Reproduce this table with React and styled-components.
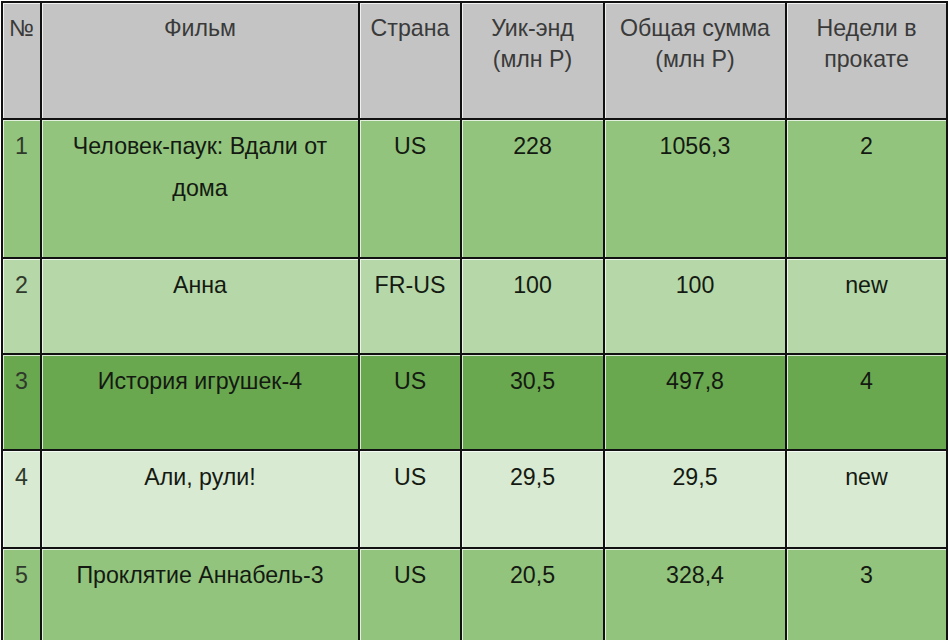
import React from "react";
import styled, { createGlobalStyle } from "styled-components";

const GlobalStyle = createGlobalStyle`
  html, body {
    margin: 0;
    padding: 0;
    background: #fff;
    overflow: hidden;
  }
  body {
    font-family: "Liberation Sans", Arial, sans-serif;
  }
`;

const Page = styled.div`
  padding: 1px 0 0 1px;
`;

const Table = styled.table`
  border-collapse: separate;
  border-spacing: 0;
  table-layout: fixed;
  width: 947px;
  font-size: 23.2px;
  line-height: 42px;
`;

const Cell = styled.td`
  box-sizing: border-box;
  border-left: 2px solid #111;
  border-top: 2px solid #111;
  padding: 5px 3px 0;
  text-align: center;
  vertical-align: top;
  color: ${(p) => (p.$dim ? "#2f3a2c" : "#141a12")};
  background: ${(p) => p.$bg};
  box-shadow: inset 1px 1px 0 rgba(255, 255, 255, 0.75);

  &:last-child {
    border-right: 2px solid #111;
  }
`;

const Head = styled(Cell).attrs({ as: "th" })`
  font-weight: normal;
  line-height: 31px;
  padding-top: 10px;
  color: #3a3a3a;
  background: #c4c4c4;
`;

const Row = styled.tr`
  height: ${(p) => p.$h}px;
`;

const widths = [39, 318, 102, 143, 182, 163];

const headers = [
  "№",
  "Фильм",
  "Страна",
  <>Уик-энд<br />(млн Р)</>,
  <>Общая сумма<br />(млн Р)</>,
  <>Недели в<br />прокате</>,
];

const rows = [
  { bg: "#93c47d", h: 139, cells: ["1", <>Человек-паук: Вдали от<br />дома</>, "US", "228", "1056,3", "2"] },
  { bg: "#b6d7a8", h: 96, cells: ["2", "Анна", "FR-US", "100", "100", "new"] },
  { bg: "#6aa84f", h: 96, cells: ["3", "История игрушек-4", "US", "30,5", "497,8", "4"] },
  { bg: "#d9ead3", h: 98, cells: ["4", "Али, рули!", "US", "29,5", "29,5", "new"] },
  { bg: "#93c47d", h: 110, cells: ["5", "Проклятие Аннабель-3", "US", "20,5", "328,4", "3"] },
];

export default function App() {
  return (
    <Page>
      <GlobalStyle />
      <Table>
        <colgroup>
          {widths.map((w, i) => (
            <col key={i} style={{ width: w }} />
          ))}
        </colgroup>
        <thead>
          <Row $h={117}>
            {headers.map((h, i) => (
              <Head key={i}>{h}</Head>
            ))}
          </Row>
        </thead>
        <tbody>
          {rows.map((r, i) => (
            <Row key={i} $h={r.h}>
              {r.cells.map((c, j) => (
                <Cell key={j} $bg={r.bg} $dim={j === 0}>
                  {c}
                </Cell>
              ))}
            </Row>
          ))}
        </tbody>
      </Table>
    </Page>
  );
}
